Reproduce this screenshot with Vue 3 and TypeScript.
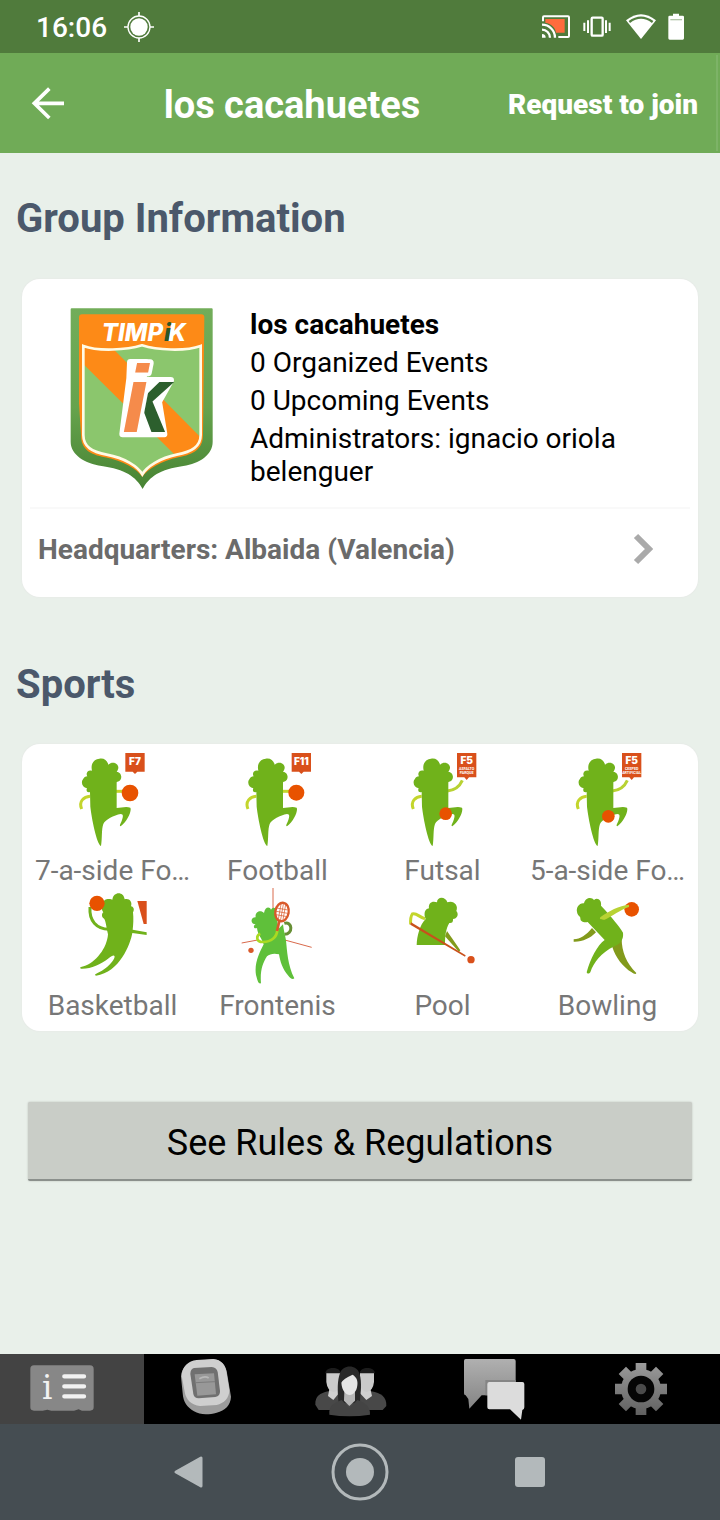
<script setup lang="ts">
import { ref } from 'vue'

interface Sport {
  id: string
  name: string
  player?: boolean
  shift?: number
  badge?: string
  surface?: string[]
  ball?: [number, number, number]
}

const groupName = 'los cacahuetes'

const details: string[] = [
  '0 Organized Events',
  '0 Upcoming Events',
  'Administrators: ignacio oriola belenguer',
]

const sports: Sport[] = [
  { id: 'f7', name: '7-a-side Fo…', player: true, shift: -102, badge: 'F7', ball: [306, 159, 25] },
  { id: 'f11', name: 'Football', player: true, shift: -98, badge: 'F11', ball: [306, 158, 24] },
  { id: 'futsal', name: 'Futsal', player: true, shift: -97, badge: 'F5', surface: ['ASFALTO', 'PARQUE'], ball: [258, 221, 19] },
  { id: 'f5', name: '5-a-side Fo…', player: true, shift: -97, badge: 'F5', surface: ['CESPED', 'ARTIFICIAL'], ball: [251, 229, 19] },
  { id: 'basketball', name: 'Basketball' },
  { id: 'frontenis', name: 'Frontenis' },
  { id: 'pool', name: 'Pool' },
  { id: 'bowling', name: 'Bowling' },
]

const playerBody =
  'M186 156C179 159 173 153 177 145C163 142 157 127 166 116C168 112 172 109 178 109C172 99 180 88 192 92C187 72 198 56 214 56C226 53 238 60 241 74C248 66 262 66 268 74C274 82 270 90 266 96C277 95 284 110 277 120C273 126 268 124 266 127V204C280 203 295 198 307 203C312 212 298 245 278 259C272 258 279 250 282 240C286 228 286 222 278 222C258 226 232 238 226 252C220 268 223 295 219 318C206 312 191 235 187 200Z'

const tabs = [
  { id: 'info', label: 'Group information', view: '66 12 240 210' },
  { id: 'events', label: 'Events', view: '498 12 240 210' },
  { id: 'members', label: 'Members', view: '930 12 240 210' },
  { id: 'chat', label: 'Chat', view: '162 12 240 210' },
  { id: 'settings', label: 'Settings', view: '594 12 240 210' },
]

const activeTab = ref('info')
const teeth = [0, 45, 90, 135, 180, 225, 270, 315]
</script>

<template>
  <div class="screen">
    <div class="status-bar">
      <span class="clock">16:06</span>
      <svg class="locate" viewBox="0 0 90 90" aria-hidden="true">
        <circle cx="45" cy="45" r="33" fill="none" stroke="#fff" stroke-width="4" />
        <circle cx="45" cy="45" r="26" fill="#fff" />
        <path d="M45 0V12M45 78V90M0 45H12M78 45H90" stroke="#fff" stroke-width="5" />
      </svg>
      <div class="indicators">
        <svg width="30" height="28" viewBox="540 37 90 84" aria-hidden="true">
          <path d="M556 55H614V96H588C586 80 574 69 556 66Z" fill="#ff6b3d" />
          <path d="M549 62V50Q549 47 552 47H624Q627 47 627 50V106Q627 109 624 109H595" fill="none" stroke="#fff" stroke-width="6" />
          <path d="M546 72A39 39 0 0 1 585 111M546 87A24 24 0 0 1 570 111" fill="none" stroke="#fff" stroke-width="7" />
          <path d="M546 100A11 11 0 0 1 557 111H546Z" fill="#fff" />
        </svg>
        <svg width="34" height="28" viewBox="663 37 102 84" aria-hidden="true">
          <rect x="695" y="51" width="33" height="54" rx="3" fill="none" stroke="#fff" stroke-width="7" />
          <path d="M673 66V91M684 59V97M738 59V97M749 66V91" stroke="#fff" stroke-width="6" />
        </svg>
        <svg width="30" height="28" viewBox="798 37 90 84" aria-hidden="true">
          <path d="M798 59Q843 22 888 59L843 115Z" fill="#fff" />
          <path d="M808 64Q843 38 878 64" fill="none" stroke="#537f40" stroke-width="7" />
        </svg>
        <svg width="18" height="28" viewBox="921 37 54 84" aria-hidden="true">
          <path d="M939 39H957V45H968Q972 45 972 49V113Q972 117 968 117H929Q925 117 925 113V49Q925 45 929 45H939Z" fill="#fff" />
          <path d="M931 57H966" stroke="#b3c6aa" stroke-width="4" />
        </svg>
      </div>
    </div>

    <header class="app-bar">
      <button class="back" type="button" aria-label="Back">
        <svg width="36" height="34" viewBox="90 258 108 102" aria-hidden="true">
          <path d="M148 266L103 310L148 354M103 310H192" fill="none" stroke="#fff" stroke-width="11" />
        </svg>
      </button>
      <h1>{{ groupName }}</h1>
      <button class="join" type="button">Request to join</button>
    </header>

    <main>
      <h2>Group Information</h2>
      <section class="card">
        <div class="summary">
          <svg class="crest" viewBox="174 108 441 558" role="img" aria-label="Timpik crest">
            <defs>
              <linearGradient id="rim" x1="0" y1="0" x2="0" y2="1">
                <stop offset="0" stop-color="#72ad5a" />
                <stop offset="0.55" stop-color="#66a34d" />
                <stop offset="1" stop-color="#478333" />
              </linearGradient>
              <clipPath id="field">
                <path d="M220 228C265 245 350 240 396 226C440 240 525 245 572 228V495C572 530 545 545 500 554C450 564 410 590 397 613C384 590 345 564 290 554C245 545 220 530 220 495Z" />
              </clipPath>
              <clipPath id="arms"><path d="M390 333H500V500H404L386 395Z" /></clipPath>
            </defs>
            <path d="M182 118Q182 115 185 115H605Q608 115 608 118V515C608 555 568 580 520 588C450 598 418 620 398 657C378 620 345 598 275 588C225 580 182 555 182 515Z" fill="url(#rim)" />
            <path d="M207 142Q207 133 216 133H574Q583 133 583 142L579 495C579 538 550 553 505 562C455 572 412 598 397 621C382 598 340 572 285 562C240 553 213 538 213 495L207 400Z" fill="#fd8a17" />
            <g clip-path="url(#field)">
              <rect x="210" y="215" width="370" height="410" fill="#8bc66d" />
              <path d="M210 225H298L580 510L520 580L210 272Z" fill="#fd8a17" />
            </g>
            <path d="M220 228C265 245 350 240 396 226C440 240 525 245 572 228V495C572 530 545 545 500 554C450 564 410 590 397 613C384 590 345 564 290 554C245 545 220 530 220 495Z" fill="none" stroke="#fffbe6" stroke-width="8" />
            <text class="wordmark" x="275" y="212" fill="#fff">TIMP</text>
            <text class="wordmark" x="475" y="212" fill="#fff">K</text>
            <text class="wordmark" x="462" y="212" fill="#2c5723">i</text>
            <path d="M361 277H407L399 331H482L446 395L462 492H338L359 325Z" fill="#fff" stroke="#fff" stroke-width="20" stroke-linejoin="round" />
            <text class="mark" x="324" y="486" fill="#2c5f2d" clip-path="url(#arms)">k</text>
            <text class="mark initial" x="337" y="486" fill="#f58b4b">i</text>
          </svg>
          <div class="details">
            <strong>{{ groupName }}</strong>
            <p v-for="line in details" :key="line">{{ line }}</p>
          </div>
        </div>
        <button class="headquarters" type="button">
          <span>Headquarters: Albaida (Valencia)</span>
          <svg width="20" height="32" viewBox="0 0 20 32" aria-hidden="true">
            <path d="M3 3L16 16L3 29" fill="none" stroke="#aaa" stroke-width="6" />
          </svg>
        </button>
      </section>

      <h2 class="sports-title">Sports</h2>
      <ul class="card sports">
        <li v-for="sport in sports" :key="sport.id">
          <svg viewBox="3 0 300 306" aria-hidden="true">
            <g v-if="sport.player" :transform="`translate(${sport.shift} -30)`">
              <path d="M186 169C168 170 151 184 161 207" fill="none" stroke="#c3d52c" stroke-width="9" />
              <path v-if="sport.surface" d="M263 153C282 151 300 139 308 121" fill="none" stroke="#b8d233" stroke-width="9" />
              <path v-else d="M263 154H290" stroke="#c3d52c" stroke-width="9" />
              <path :d="playerBody" fill="#70b21b" />
              <circle v-if="sport.ball" :cx="sport.ball[0]" :cy="sport.ball[1]" :r="sport.ball[2]" fill="#e85200" />
              <template v-if="sport.surface">
                <path d="M292 39H350V112H328L321 120L314 112H292Z" fill="#d9501b" />
                <text class="badge" x="321" y="71">{{ sport.badge }}</text>
                <text v-for="(word, i) in sport.surface" :key="word" class="surface" x="321" :y="89 + i * 13">{{ word }}</text>
              </template>
              <template v-else>
                <path d="M292 39H350V95H328L321 102L314 95H292Z" fill="#d9501b" />
                <text class="badge" x="321" y="76">{{ sport.badge }}</text>
              </template>
            </g>

            <g v-else-if="sport.id === 'basketball'" transform="translate(-127 0)">
              <path d="M211 66C208 108 230 131 268 133" fill="none" stroke="#70b21b" stroke-width="9" />
              <path d="M265 148C260 125 258 108 254 102C244 96 246 86 251 82C242 70 246 44 264 42C272 41 276 44 278 44C281 19 312 18 315 43C328 38 339 50 334 64C344 66 344 76 340 82C342 100 341 120 339 134L381 142V150L338 144C332 178 300 262 229 272C222 269 230 266 238 262C262 250 284 226 285 215C283 208 276 214 268 219C240 240 215 252 184 251C178 247 184 246 192 244C228 233 262 190 265 148Z" fill="#70b21b" />
              <circle cx="232" cy="55" r="23" fill="#e85200" />
              <path d="M353 48H381V117H372Z" fill="#d9501b" />
            </g>

            <g v-else-if="sport.id === 'frontenis'" transform="translate(-622 0)">
              <path d="M760 9V75M666 174L714 165M799 166L876 187" stroke="#d96a4c" stroke-width="3" />
              <path d="M794 115C818 108 822 147 794 148" fill="none" stroke="#678f35" stroke-width="9" />
              <path d="M710 130C700 131 701 121 708 118C692 118 691 97 708 97C705 79 724 74 733 84C736 65 750 64 754 74C761 63 773 69 770 84L776 132L790 118C792 136 796 150 799 166C802 195 804 242 824 280C818 285 811 278 806 272C789 255 781 228 778 208C765 204 750 206 742 214C728 235 721 260 724 295C715 298 713 284 709 270C703 235 720 202 732 178C727 160 714 150 712 129Z" fill="#5fc03a" />
              <path d="M722 146C709 151 708 171 730 171C754 171 772 158 773 134" fill="none" stroke="#a9da22" stroke-width="8" />
              <g transform="rotate(10 787 81)">
                <ellipse cx="787" cy="81" rx="20" ry="28" fill="#fff" stroke="#d9592a" stroke-width="7" />
                <path d="M780 58V104M787 55V107M794 58V104M769 72H805M769 82H805M771 92H803" stroke="#d9592a" stroke-width="2" />
              </g>
              <path d="M780 104L772 138" stroke="#d9592a" stroke-width="8" />
              <circle cx="694" cy="196" r="8" fill="#d9592a" />
            </g>

            <g v-else-if="sport.id === 'pool'" transform="translate(-97 0)">
              <path d="M262 138L302 196L298 201L256 154Z" fill="#829a1b" />
              <path d="M171 180C172 153 180 120 198 102C192 88 194 72 208 70C205 54 218 46 232 52C232 34 258 34 263 52C280 44 298 60 290 78C299 88 292 102 280 102C281 112 276 115 269 114C258 132 256 155 256 180Z" fill="#70b21b" />
              <path d="M196 101C180 98 170 82 158 87C153 94 152 104 153 118" fill="none" stroke="#c3d52c" stroke-width="9" />
              <path d="M154 112L318 211L316 215L152 119Z" fill="#c9511c" />
              <circle cx="334" cy="224" r="11" fill="#d9501b" />
            </g>

            <g v-else transform="translate(-592 0)">
              <path d="M697 129C680 150 662 162 642 163V170C668 171 692 160 709 142Z" fill="#829a1b" />
              <path d="M758 186L786 160C786 200 800 235 830 264C829 269 823 267 816 262C790 246 768 218 758 186Z" fill="#829a1b" />
              <path d="M684 111L735 165C713 180 692 222 681 262C683 268 689 266 692 262C702 232 724 204 764 184C779 178 793 165 790 143C780 125 755 95 724 62C727 47 714 35 703 45C697 35 677 36 673 55C659 53 649 68 652 80C653 93 664 94 662 100C662 112 675 113 684 111Z" fill="#70b21b" />
              <circle cx="816" cy="73" r="22" fill="#e85200" />
              <path d="M722 97C745 78 780 62 808 59V66C785 72 755 96 735 104C724 105 718 102 722 97Z" fill="#b8d233" />
            </g>
          </svg>
          <span>{{ sport.name }}</span>
        </li>
      </ul>

      <button class="rules" type="button">See Rules &amp; Regulations</button>
    </main>

    <nav class="tabs" aria-label="Group sections">
      <button
        v-for="tab in tabs"
        :key="tab.id"
        type="button"
        :class="{ active: activeTab === tab.id }"
        :aria-label="tab.label"
        @click="activeTab = tab.id"
      >
        <svg width="80" height="70" :viewBox="tab.view" aria-hidden="true">
          <defs>
            <linearGradient id="gear-shade" gradientUnits="userSpaceOnUse" x1="0" y1="39" x2="0" y2="195">
              <stop offset="0" stop-color="#9b9b9b" />
              <stop offset="1" stop-color="#606060" />
            </linearGradient>
            <linearGradient id="bubble-shade" x1="0" y1="0" x2="0" y2="1">
              <stop offset="0" stop-color="#b0b0b0" />
              <stop offset="1" stop-color="#848484" />
            </linearGradient>
          </defs>
          <g v-if="tab.id === 'info'">
            <path d="M102 46H270Q281 46 281 57V172Q281 182 270 182H246L236 178L222 182H154L142 179L128 182H102Q91 182 91 172V57Q91 46 102 46Z" fill="#878787" />
            <text class="info-mark" x="142" y="147">i</text>
            <path d="M193 79H252M193 109H252M193 139H252" stroke="#f2f2f2" stroke-width="13" stroke-linecap="round" />
          </g>
          <g v-else-if="tab.id === 'events'">
            <path d="M590 32L640 28C665 30 680 50 682 75L693 140C692 165 675 182 650 188C625 195 600 195 582 184C562 172 550 158 548 130L543 80C544 52 565 35 590 32Z" fill="#9c9c9c" />
            <path d="M590 30L640 27C664 29 678 45 680 70L688 120C688 145 672 160 650 165L600 168C575 165 558 150 554 125L545 78C546 50 565 33 590 30Z" fill="#cfcfcf" />
            <path d="M582 54L635 51Q650 52 653 66L660 122Q661 138 646 141L596 145Q583 145 580 132L571 72Q571 57 582 54Z" fill="#707070" />
            <path d="M584 73L642 70L648 133L592 137Z" fill="#989898" />
            <path d="M588 98L645 95" stroke="#7c7c7c" stroke-width="3" />
            <path d="M598 86Q615 76 626 84" fill="none" stroke="#b8b8b8" stroke-width="5" />
          </g>
          <g v-else-if="tab.id === 'members'">
            <path d="M946 164C945 138 960 130 984 124H1114C1143 130 1160 140 1159 168L1148 180H956Z" fill="#484848" />
            <path d="M984 138L1000 150L1018 128L1014 108H990ZM1082 108L1080 130L1099 150L1116 138L1110 112Z" fill="#d0d0d0" />
            <path d="M979 68H1021V100Q1018 124 1000 126Q982 122 979 96ZM1080 68H1122V96Q1119 122 1101 126Q1083 124 1080 100Z" fill="#cacaca" />
            <path d="M976 70C978 49 1020 49 1022 70ZM1079 70C1081 49 1123 49 1125 70Z" fill="#1c1c1c" />
            <path d="M1016 160C1012 120 1012 90 1020 70C1028 43 1070 43 1078 70C1088 100 1080 130 1080 160Z" fill="#292929" />
            <path d="M988 194C986 164 1005 158 1025 150L1048 175L1072 150C1095 158 1112 170 1110 194Q1048 204 988 194Z" fill="#444" />
            <path d="M1033 125H1065V152L1048 168L1032 152Z" fill="#b6b6b6" />
            <path d="M1024 98C1030 86 1050 78 1058 74C1070 82 1074 92 1072 106C1068 145 1028 146 1024 98Z" fill="#e5e5e5" />
          </g>
          <g v-else-if="tab.id === 'chat'">
            <path d="M197 27H341Q347 27 347 33V136H245L208 176L205 147L197 136Q192 136 192 130V33Q192 27 197 27Z" fill="url(#bubble-shade)" />
            <path d="M256 90H347V136H256Z" fill="#858585" />
            <path d="M268 96H367Q373 96 373 102V172Q373 178 367 180L363 209L330 178H268Q262 178 262 172V102Q262 96 268 96Z" fill="#dcdcdc" />
          </g>
          <g v-else>
            <g fill="url(#gear-shade)">
              <path d="M707 39H739V195H707ZM645 101H801V133H645Z" />
              <path d="M656 72L678 50L790 162L768 184ZM768 50L790 72L678 184L656 162Z" />
              <circle cx="723" cy="117" r="60" />
            </g>
            <circle cx="723" cy="117" r="40" fill="#050505" />
            <circle cx="723" cy="117" r="16" fill="#4b4b4b" />
          </g>
        </svg>
      </button>
    </nav>

    <nav class="system" aria-label="System navigation">
      <button type="button" aria-label="Back">
        <svg width="60" height="60" viewBox="0 0 60 60" aria-hidden="true">
          <path d="M16 30L41 16V44Z" fill="#b3b9bb" stroke="#b3b9bb" stroke-width="3" stroke-linejoin="round" />
        </svg>
      </button>
      <button type="button" aria-label="Home">
        <svg width="60" height="60" viewBox="0 0 60 60" aria-hidden="true">
          <circle cx="30" cy="30" r="27" fill="none" stroke="#b3b9bb" stroke-width="3" />
          <circle cx="30" cy="30" r="14" fill="#b3b9bb" />
        </svg>
      </button>
      <button type="button" aria-label="Recent apps">
        <svg width="60" height="60" viewBox="0 0 60 60" aria-hidden="true">
          <rect x="15" y="15" width="30" height="30" rx="3" fill="#b3b9bb" />
        </svg>
      </button>
    </nav>
  </div>
</template>

<style>
body {
  margin: 0;
  background: #e9f0ea;
}
</style>

<style scoped>
.screen {
  display: flex;
  flex-direction: column;
  min-height: 100vh;
  font-family: Roboto, "Liberation Sans", sans-serif;
  font-size: 28px;
  line-height: 33px;
  color: #000;
}

svg {
  display: block;
  flex: none;
}

button {
  margin: 0;
  padding: 0;
  border: 0;
  background: none;
  color: inherit;
  font: inherit;
  cursor: pointer;
}

h1,
h2,
p,
ul {
  margin: 0;
  padding: 0;
}

.status-bar {
  display: flex;
  align-items: center;
  height: 53px;
  padding: 0 35px 0 36px;
  background: #507b3c;
  color: #fff;
}

.clock {
  padding-top: 2px;
  font-weight: 500;
}

.locate {
  width: 30px;
  height: 30px;
  margin-left: 17px;
}

.indicators {
  display: flex;
  gap: 11px;
  margin-left: auto;
}

.app-bar {
  display: flex;
  align-items: center;
  height: 100px;
  padding: 0 2px 0 30px;
  background: #70ab57;
  color: #fff;
}

.app-bar h1 {
  flex: 1;
  padding: 4px 0 0 10px;
  font-size: 38px;
  line-height: 44px;
  font-weight: 700;
  text-align: center;
}

.join {
  height: 96px;
  padding: 2px 18px 0 0;
  border-right: 2px solid #7db367;
  font-weight: 900;
}

main {
  flex: 1;
  padding: 42px 22px 60px;
}

h2 {
  margin: 0 -6px 36px;
  color: #4b586b;
  font-size: 40px;
  line-height: 48px;
  font-weight: 700;
}

.sports-title {
  margin-top: 64px;
  margin-bottom: 35px;
}

.card {
  border-radius: 18px;
  background: #fff;
  box-shadow: 0 0 2px #e3e3e3;
}

.summary {
  display: flex;
  gap: 35px;
  margin: 0 8px;
  padding: 27px 38px 15px;
  border-bottom: 2px solid #f9f9f9;
}

.crest {
  width: 147px;
  height: 186px;
}

.wordmark {
  font: italic 800 72px Inter, sans-serif;
}

.mark {
  font: italic 700 282px "Liberation Sans", Arial, sans-serif;
}

.initial {
  stroke: #fff;
  stroke-width: 22px;
  stroke-linejoin: round;
  paint-order: stroke;
}

.details {
  display: flex;
  flex-direction: column;
  gap: 5px;
  padding-top: 2px;
}

.details strong {
  font-weight: 700;
}

.headquarters {
  display: flex;
  align-items: center;
  justify-content: space-between;
  width: 100%;
  height: 88px;
  padding: 0 45px 8px 16px;
  color: #6b6b6b;
  font-weight: 700;
  text-align: left;
}

.sports {
  display: grid;
  grid-template-columns: repeat(4, minmax(0, 1fr));
  padding: 6px 8px 11px;
  list-style: none;
}

.sports li {
  display: flex;
  flex-direction: column;
  align-items: center;
  height: 135px;
  color: #777;
}

.sports li svg {
  width: 100px;
  height: 102px;
}

.sports li span {
  padding-top: 2px;
  white-space: nowrap;
}

.badge {
  fill: #fff;
  font: 900 30px Inter, sans-serif;
  text-anchor: middle;
}

.surface {
  fill: #fff;
  font: 700 11px Roboto, sans-serif;
  text-anchor: middle;
}

.rules {
  display: block;
  width: calc(100% - 12px);
  height: 79px;
  margin: 71px 6px 0;
  padding-top: 4px;
  border-bottom: 2px solid #8b908c;
  border-radius: 2px;
  background: #c9cdc7;
  box-shadow: 0 0 2px #b4b9b4;
  font-size: 36px;
  line-height: 42px;
}

.tabs {
  display: grid;
  grid-template-columns: repeat(5, minmax(0, 1fr));
  background: #000;
}

.tabs button {
  display: flex;
  justify-content: center;
  height: 70px;
  padding-right: 20px;
}

.tabs .active {
  background: #434343;
}

.info-mark {
  fill: #f2f2f2;
  font: 400 98px "DejaVu Serif", serif;
  text-anchor: middle;
}

.system {
  display: flex;
  align-items: center;
  justify-content: center;
  gap: 110px;
  height: 96px;
  background: #454d52;
}
</style>
